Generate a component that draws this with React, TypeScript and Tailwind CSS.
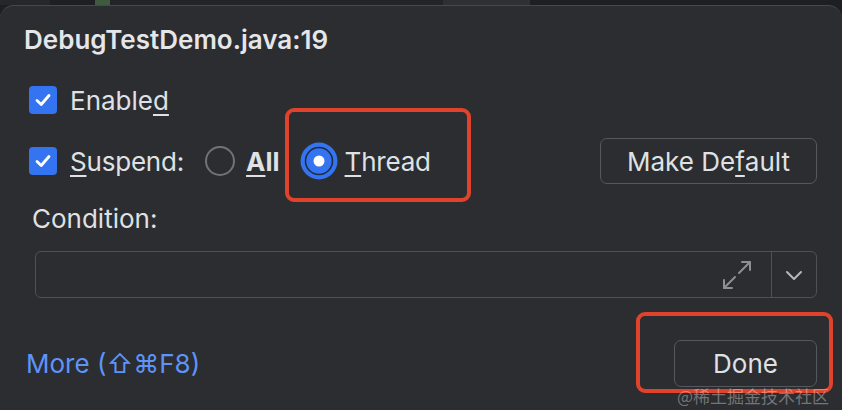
import React from 'react';

function CheckBox() {
  return (
    <span className="flex h-[28px] w-[28px] items-center justify-center rounded-[4px] bg-[#3574f0]">
      <svg width="20" height="20" viewBox="0 0 20 20" fill="none">
        <path d="M4 10.5 L8.2 14.5 L16 5.5" stroke="#fff" strokeWidth="2.8" strokeLinecap="round" strokeLinejoin="round" />
      </svg>
    </span>
  );
}

function Radio({ checked }: { checked?: boolean }) {
  if (checked) {
    return (
      <svg width="38" height="38" viewBox="0 0 38 38">
        <circle cx="19" cy="19" r="18.5" fill="#3574f0" />
        <circle cx="19" cy="19" r="13.5" fill="#3574f0" stroke="#1f2b45" strokeWidth="1.6" />
        <circle cx="19" cy="19" r="5.5" fill="#fff" />
      </svg>
    );
  }
  return (
    <svg width="32" height="32" viewBox="0 0 32 32">
      <circle cx="16" cy="16" r="14" fill="none" stroke="#6f737a" strokeWidth="2" />
    </svg>
  );
}

export default function App() {
  return (
    <div
      className="relative h-[410px] w-[842px] overflow-hidden bg-[#1e1f22] text-[#dfe1e5]"
      style={{ fontFamily: "Inter, 'Noto Sans', sans-serif" }}
    >
      {/* editor tabs peeking above the popup */}
      <div className="flex h-[5px]">
        <div className="w-[50px] bg-[#25272a]" />
        <div className="w-[45px] bg-[#1e1f22]" />
        <div className="w-[15px] bg-[#3f5a3f]" />
        <div className="w-[333px] bg-[#232427]" />
        <div className="w-[87px] bg-[#2e3034]" />
        <div className="flex-1 bg-[#1e1f22]" />
      </div>

      {/* popup */}
      <div className="flex h-[405px] flex-col rounded-t-[14px] border-t border-[#45484d] bg-[#2b2d30] pl-[24px] pr-[25px]">
        <div className="mt-[16px] h-[36px] text-[26px] font-semibold leading-[36px] text-[#e4e6ea]">
          DebugTestDemo.java:19
        </div>

        <div className="mt-[22px] flex h-[40px] items-center pl-[5px]">
          <CheckBox />
          <span className="ml-[13px] text-[26px]">
            Enable<span className="underline decoration-[1.5px] underline-offset-[4px]">d</span>
          </span>
        </div>

        <div className="mt-[18px] flex h-[46px] items-center pl-[5px]">
          <CheckBox />
          <span className="ml-[13px] text-[26px] tracking-[-0.2px]">
            <span className="underline decoration-[1.5px] underline-offset-[4px]">S</span>uspend:
          </span>
          <span className="ml-[20px] flex items-center">
            <Radio />
          </span>
          <span className="ml-[10px] text-[26px] font-bold">
            <span className="underline decoration-[1.5px] underline-offset-[4px]">A</span>ll
          </span>
          <span className="ml-[20px] flex items-center">
            <Radio checked />
          </span>
          <span className="ml-[7px] text-[26px] tracking-[-0.2px]">
            <span className="underline decoration-[1.5px] underline-offset-[4px]">T</span>hread
          </span>
          <div className="ml-auto flex h-[46px] w-[217px] items-center justify-center rounded-[7px] border border-[#55585e] text-[26px]">
            Make De<span className="underline decoration-[1.5px] underline-offset-[4px]">f</span>ault
          </div>
        </div>

        <div className="mt-[17px] h-[36px] pl-[8px] text-[26px] leading-[36px]">Condition:</div>

        <div className="ml-[11px] mt-[14px] flex h-[47px] rounded-[6px] border border-[#4e5157]">
          <div className="flex flex-1 items-center justify-end pr-[18px]">
            <svg width="32" height="32" viewBox="0 0 32 32" fill="none" stroke="#8c9096" strokeWidth="2" strokeLinecap="round" strokeLinejoin="round">
              <path d="M18 14 L29 3" />
              <path d="M21 3 H29 V11" />
              <path d="M14 18 L3 29" />
              <path d="M3 21 V29 H11" />
            </svg>
          </div>
          <div className="flex w-[45px] items-center justify-center border-l border-[#4e5157]">
            <svg width="22" height="22" viewBox="0 0 22 22" fill="none" stroke="#b4b8bf" strokeWidth="2" strokeLinecap="round" strokeLinejoin="round">
              <path d="M4 8 L11 15 L18 8" />
            </svg>
          </div>
        </div>

        <div className="mt-[42px] flex items-center pl-[2px]">
          <span className="text-[26px] text-[#5e94f8]">More (⇧⌘F8)</span>
          <div className="ml-auto flex h-[47px] w-[143px] items-center justify-center rounded-[7px] border border-[#55585e] text-[26px]">
            Done
          </div>
        </div>
      </div>

      {/* red annotation boxes */}
      <div className="absolute left-[285px] top-[108px] h-[94px] w-[186px] rounded-[9px] border-[4px] border-[#e0422c]" />
      <div className="absolute left-[636px] top-[312px] h-[81px] w-[197px] rounded-[9px] border-[4px] border-[#e0422c]" />

      {/* watermark */}
      <div
        className="absolute left-[677px] top-[385px] whitespace-nowrap text-[17px] leading-[22px] text-[#ffffff59]"
        style={{ fontFamily: "'Noto Sans CJK SC', 'Noto Sans', sans-serif" }}
      >
        @稀土掘金技术社区
      </div>
    </div>
  );
}
